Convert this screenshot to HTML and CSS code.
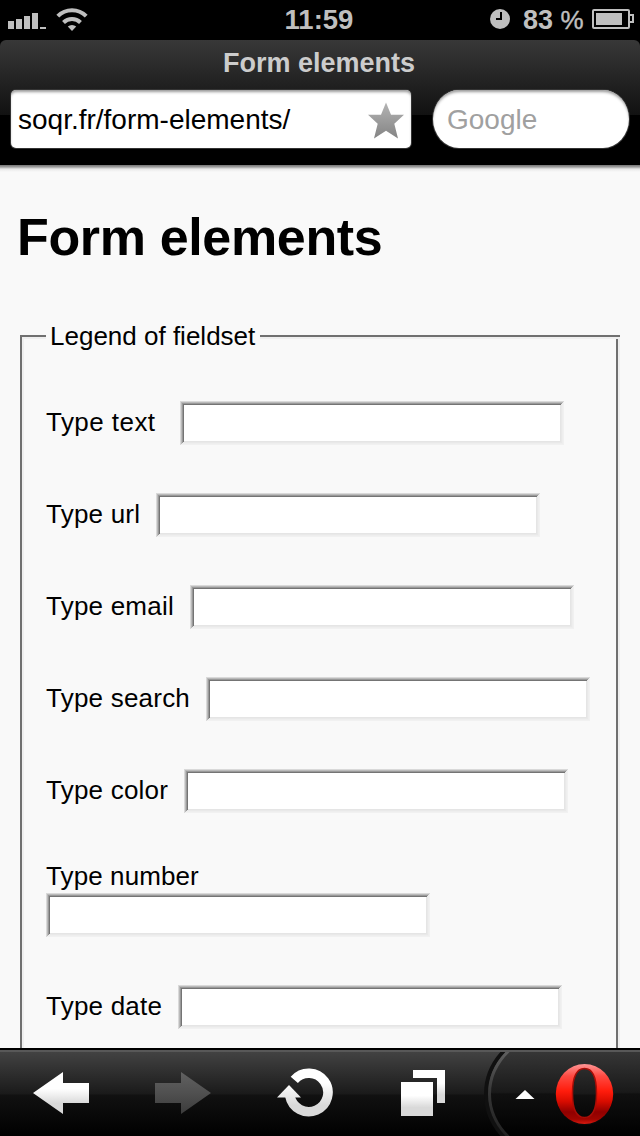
FILE: index.html
```html
<!DOCTYPE html>
<html lang="en">
<head>
<meta charset="utf-8">
<title>Form elements</title>
<link rel="stylesheet" href="styles.css">
</head>
<body>
<div class="status">
  <svg class="signal" width="92" height="40" viewBox="0 0 92 40">
    <g fill="#bfbfbf"><path d="M8 21h6v8H8zM16 19h6v10h-6zM24 16h6v13h-6zM32 13h6v16h-6zM40 27h6v2h-6z"/>
    <path d="M72 31l-4.200-4.400a6 6 0 0 1 8.400 0z"/></g>
    <g fill="none" stroke="#bfbfbf" stroke-width="4"><path d="M57.800 16.200a20 20 0 0 1 28.400 0"/><path d="M63.500 22.500a12 12 0 0 1 17 0"/></g>
  </svg>
  <span class="time">11:59</span>
  <div class="power">
    <svg width="20" height="20" viewBox="0 0 20 20"><circle cx="10" cy="10" r="10" fill="#bfbfbf"/><path d="M11 3v7H6" fill="none" stroke="#000" stroke-width="2"/></svg>
    <span class="percent">83 <span class="sign">%</span></span>
    <svg width="42" height="20" viewBox="0 0 42 20"><rect x="1" y="1" width="36" height="18" rx="1" fill="none" stroke="#bfbfbf" stroke-width="2"/><path d="M4 4h26v12H4z" fill="#bfbfbf"/><path d="M38 6h3v7h-3" fill="none" stroke="#bfbfbf" stroke-width="2"/></svg>
  </div>
</div>
<header class="chrome">
  <div class="title"><span>Form elements</span></div>
  <div class="bars">
    <div class="url"><span class="address">soqr.fr/form-elements/</span>
      <svg width="36" height="37" viewBox="0 0 36 37"><defs><linearGradient id="star" x2="0" y2="1"><stop stop-color="#b4b4b4"/><stop offset="1" stop-color="#848484"/></linearGradient></defs><path d="M18 .5l5 12.300H36L26.300 21.800 30 36.500 18 28.800 6 36.500l3.700-14.700L0 12.800h13z" fill="url(#star)"/></svg>
    </div>
    <div class="search"><span>Google</span></div>
  </div>
</header>
<main class="page">
  <h1><span>Form elements</span></h1>
  <div class="frame-top"><i class="line lead"></i><span class="legend">Legend of fieldset</span><i class="line"></i></div>
  <div class="frame">
    <div class="row"><label class="w-text"><span>Type text</span></label><input type="text"></div>
    <div class="row"><label class="w-url"><span>Type url</span></label><input type="text"></div>
    <div class="row"><label class="w-email"><span>Type email</span></label><input type="text"></div>
    <div class="row"><label class="w-search"><span>Type search</span></label><input type="text"></div>
    <div class="row"><label class="w-color"><span>Type color</span></label><input type="text"></div>
    <div class="row stacked"><label><span>Type number</span></label><input type="text"></div>
    <div class="row"><label class="w-date"><span>Type date</span></label><input type="text"></div>
  </div>
</main>
<nav class="toolbar">
  <svg class="back" width="60" height="48" viewBox="0 0 60 48"><defs><linearGradient id="w" x2="0" y2="1"><stop offset=".4" stop-color="#fff"/><stop offset=".75" stop-color="#d9d9d9"/></linearGradient></defs><path d="M1 21L31 0v11h26v20H31v11z" fill="url(#w)"/></svg>
  <svg class="forward" width="60" height="48" viewBox="0 0 60 48"><defs><linearGradient id="g" x2="0" y2="1"><stop stop-color="#616161"/><stop offset=".5" stop-color="#505050"/><stop offset="1" stop-color="#3b3b3b"/></linearGradient></defs><path d="M57 21L27 0v11H1v20h26v11z" fill="url(#g)"/></svg>
  <svg class="reload" width="60" height="50" viewBox="0 0 60 50"><defs><linearGradient id="r" gradientUnits="userSpaceOnUse" x1="0" y1="0" x2="0" y2="50"><stop offset=".3" stop-color="#fff"/><stop offset=".75" stop-color="#d9d9d9"/></linearGradient></defs><path d="M18.300 11.800A19.200 19.200 0 1 1 13.900 28" fill="none" stroke="url(#r)" stroke-width="9.600"/><path d="M1 29.500L13 17l12 12.500z" fill="url(#r)"/></svg>
  <svg class="tabs" width="46" height="48" viewBox="0 0 46 48"><path d="M13 1h32v33h-8V9H13z" fill="url(#w)"/><path d="M1 13h32v34H1z" fill="url(#w)"/></svg>
  <svg class="menu" width="158" height="84" viewBox="482 1052 158 84">
    <defs>
      <linearGradient id="arc" x2="0" y2="1"><stop stop-color="#606060"/><stop offset=".5" stop-color="#353535"/><stop offset="1" stop-color="#202020"/></linearGradient>
      <linearGradient id="panel" x2="0" y2="1"><stop stop-color="#363636"/><stop offset=".48" stop-color="#191919"/><stop offset=".5" stop-color="#101010"/><stop offset="1" stop-color="#000"/></linearGradient>
      <linearGradient id="red" x2="0" y2="1"><stop stop-color="#ff9696"/><stop offset=".2" stop-color="#ff4a42"/><stop offset=".45" stop-color="#ff1c0c"/><stop offset=".62" stop-color="#d90c00"/><stop offset=".8" stop-color="#900000"/><stop offset=".92" stop-color="#a00500"/><stop offset="1" stop-color="#d91a10"/></linearGradient>
      <linearGradient id="hole" x2="0" y2="1"><stop stop-color="#2c2c2c"/><stop offset=".52" stop-color="#191919"/><stop offset=".54" stop-color="#101010"/><stop offset="1" stop-color="#060606"/></linearGradient>
    </defs>
    <path d="M507 1052a57 57 0 0 0 0 84h133v-84z" fill="url(#panel)"/>
    <path d="M505 1050Q486 1069 486 1094T505 1138" fill="none" stroke="#101010" stroke-width="4"/>
    <path d="M509.500 1050Q489.500 1069 489.500 1094T509.500 1138" fill="none" stroke="url(#arc)" stroke-width="3"/>
    <path d="M515.500 1099l9.500-9 9.500 9z" fill="#fff"/>
    <ellipse cx="584.500" cy="1095" rx="28.500" ry="30.500" fill="#090909"/>
    <ellipse cx="584.500" cy="1094" rx="28.700" ry="30" fill="url(#red)"/>
    <path d="M584.500 1068.500C593.500 1068.500 596.500 1080 596.500 1093.500S593.500 1117.500 584.500 1117.500 572.500 1107 572.500 1093.500 575.500 1068.500 584.500 1068.500z" fill="url(#hole)" stroke="#a90d06" stroke-width="1.500"/>
  </svg>
</nav>
</body>
</html>
```
FILE: styles.css
```css
* { box-sizing: border-box; }
body {
  margin: 0; width: 640px; height: 1136px; overflow: hidden;
  display: flex; flex-direction: column;
  background: #000; color: #000;
  font: 26px/30px "Liberation Sans", Arial, sans-serif;
}
svg { display: block; flex: none; }
.status {
  height: 40px; flex: none; display: grid; grid-template-columns: 1fr auto 1fr;
  align-items: center; color: #bfbfbf; font-weight: bold;
}
.time { font-size: 27.5px; margin-right: 2px; }
.power { display: flex; justify-content: flex-end; align-items: center; padding-right: 6px; }
.power svg { margin-top: -2px; }
.percent { margin: 0 6px 0 13px; width: 63px; white-space: nowrap; font-size: 27px; }
.sign { font-weight: normal; font-size: 26px; -webkit-text-stroke: .4px #bfbfbf; }
.chrome {
  height: 125px; flex: none; border-radius: 6px 6px 0 0;
  background: linear-gradient(#383838, #111 75px, #000 75px);
}
.title { height: 50px; padding: 8px 2px 0 0; text-align: center; color: #ccc; font-weight: bold; font-size: 27px; }
.bars { display: flex; gap: 22px; padding-left: 11px; }
.url, .search {
  height: 58px; display: flex; align-items: center; background: #fff;
  box-shadow: inset 0 3px 3px -1px #999, 0 0 0 1px #333;
}
.url { width: 400px; border-radius: 5px; justify-content: space-between; padding: 2px 7px 0 7px; font-size: 28px; }
.search { width: 196px; border-radius: 26px/29px; padding: 2px 0 0 14px; color: #a0a0a0; font-size: 28px; }
.page {
  height: 883px; flex: none; overflow: hidden; padding-left: 17px;
  background: linear-gradient(#747474, #a0a0a0 2px, #e8e8e8 4px, #f9f9f9 7px);
}
h1 { margin: 0; padding-top: 42px; height: 170px; font-size: 52px; line-height: 60px; letter-spacing: -.35px; }
.frame-top { display: flex; width: 600px; height: 4px; margin-left: 3px; }
.line { flex: 1; height: 4px; background: linear-gradient(#707070 2px, #efefef 2px); }
.lead { flex: 0 0 26px; border-left: 2px solid #707070; }
.legend { width: 214px; padding-left: 4px; margin-top: -14px; white-space: nowrap; }
.frame {
  width: 600px; height: 760px; margin-left: 3px; padding: 62px 0 0 24px;
  border-left: 2px solid #707070; border-right: 2px solid #efefef;
  box-shadow: inset 2px 0 #efefef, inset -2px 0 #707070;
  display: flex; flex-direction: column; gap: 48px;
}
.row { display: flex; align-items: flex-start; }
.row label { flex: none; padding-top: 6px; white-space: nowrap; letter-spacing: .22px; }
/* Sunken bevel, stepped one pixel at a time from the outer edge inwards. */
.row input {
  width: 384px; height: 44px; margin: 0; padding: 4px; border: 0; outline: 0;
  appearance: none; border-radius: 0; background: #fff;
  box-shadow:
    inset 1px 1px #d9d9d9, inset -1px -1px #f1f1f1,
    inset 2px 2px #bababa, inset -2px -2px #eee,
    inset 3px 3px #999, inset -3px -3px #e9e9e9,
    inset 4px 4px #747474, inset -4px -4px #e5e5e5;
}
.w-text { width: 134px; }
.w-text span { letter-spacing: .45px; }
.w-url { width: 110px; }
.w-email { width: 144px; }
.w-search { width: 160px; }
.w-color { width: 138px; }
.w-date { width: 132px; }
.stacked { flex-direction: column; }
.row.stacked label { padding: 0 0 2px; letter-spacing: .1px; }
.toolbar {
  height: 88px; flex: none; display: flex; align-items: flex-start;
  border-top: 2px solid #000; box-shadow: inset 0 2px #585858;
  background: linear-gradient(#444, #1a1a1a 44px, #111 45px, #000 86px);
}
.back { margin: 22px 0 0 32px; }
.forward { margin: 22px 0 0 62px; }
.reload { margin: 18px 0 0 62px; }
.tabs { margin: 19px 0 0 64px; }
.menu { margin: 2px 0 0 36px; }
```
